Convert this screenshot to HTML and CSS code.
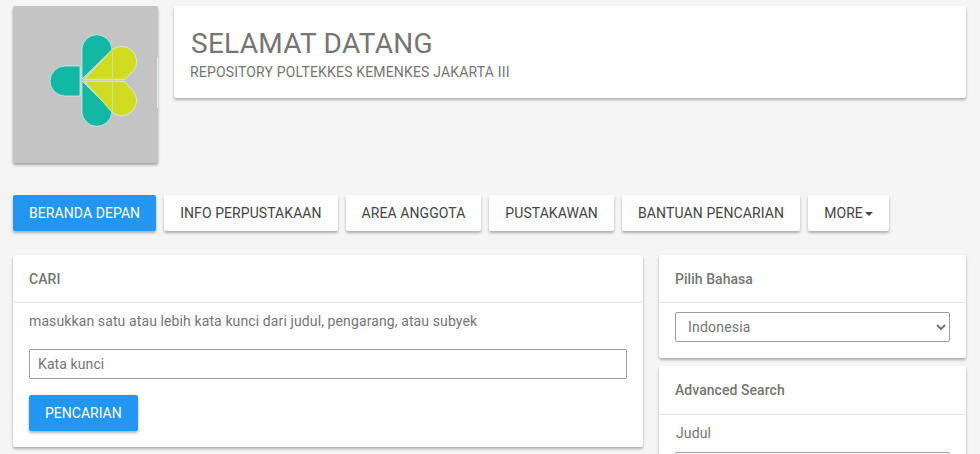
FILE: index.html
```html
<!DOCTYPE html>
<html lang="id">
<head>
<meta charset="utf-8">
<title>Repository Poltekkes Kemenkes Jakarta III</title>
<link rel="stylesheet" href="styles.css">
</head>
<body>
<div class="page">
  <header class="top">
    <div class="logo-card">
      <svg class="logo" viewBox="0 0 145 157" width="145" height="157" aria-hidden="true">
        <g transform="translate(-13 -6)" stroke="#dff5ee" stroke-width="0.7">
          <path class="teal" d="M80 66H65a15 15 0 0 0 0 30H80Z"/>
          <path class="teal" d="M82 79V48a15 15 0 0 1 29.8 0V50Z"/>
          <path class="teal" d="M82 81V113a15 15 0 0 0 29.8 0V110Z"/>
          <path class="lime" d="M84.5 79.3L111.4 50.4A15 15 0 0 1 132.6 71.6L124.5 79.3Z"/>
          <path class="lime" d="M84.5 81.3L124.5 81.3L132.6 90.4A15 15 0 0 1 111.4 111.6Z"/>
          <path class="divide" d="M112.5 52V111"/>
          <path class="edge" d="M157.5 57V108"/>
        </g>
      </svg>
    </div>
    <div class="welcome">
      <h1 class="welcome-title">SELAMAT DATANG</h1>
      <p class="welcome-sub">REPOSITORY POLTEKKES KEMENKES JAKARTA III</p>
    </div>
  </header>

  <nav class="nav">
    <a class="btn btn-primary">BERANDA DEPAN</a>
    <a class="btn">INFO PERPUSTAKAAN</a>
    <a class="btn">AREA ANGGOTA</a>
    <a class="btn">PUSTAKAWAN</a>
    <a class="btn btn-wide">BANTUAN PENCARIAN</a>
    <a class="btn">MORE<span class="caret"></span></a>
  </nav>

  <div class="columns">
    <main class="main">
      <section class="card">
        <div class="card-head">CARI</div>
        <div class="card-body search-body">
          <p class="hint">masukkan satu atau lebih kata kunci dari judul, pengarang, atau subyek</p>
          <input class="field" type="text" placeholder="Kata kunci">
          <div><button class="btn btn-primary btn-plain" type="button">PENCARIAN</button></div>
        </div>
      </section>
    </main>
    <aside class="side">
      <section class="card">
        <div class="card-head">Pilih Bahasa</div>
        <div class="card-body lang-body">
          <select class="field select"><option>Indonesia</option></select>
        </div>
      </section>
      <section class="card">
        <div class="card-head card-head-tall">Advanced Search</div>
        <div class="card-body adv-body">
          <label class="label">Judul</label>
          <input class="field" type="text">
        </div>
      </section>
    </aside>
  </div>
</div>
</body>
</html>
```
FILE: styles.css
```css
* { box-sizing: border-box; }
html, body { height: 454px; overflow: hidden; }
body {
  margin: 0;
  background: #f5f5f5;
  color: #757575;
  font-family: Roboto, "Liberation Sans", sans-serif;
  font-size: 14px;
}
.page { padding: 6px 14px 0 13px; }
.top { display: flex; gap: 16px; align-items: flex-start; }
.logo-card {
  width: 145px;
  height: 157px;
  flex: none;
  background: #c4c4c4;
  border-radius: 2px;
  box-shadow: 0 2px 3px rgba(0,0,0,.35);
}
.logo { display: block; }
.teal { fill: #12b8a4; }
.lime { fill: #cfdc20; }
.divide { stroke: #d8dc9c; stroke-width: 1; fill: none; }
.edge { stroke: #dbeeea; stroke-width: 1; fill: none; }
.welcome {
  flex: 1;
  height: 92px;
  background: #fff;
  border-radius: 2px;
  padding: 21px 16px 0;
  box-shadow: 0 2px 3px rgba(0,0,0,.3);
}
.welcome-title { margin: 0 0 0 1px; font-size: 28px; line-height: 34px; font-weight: 400; letter-spacing: .27px; color: #757575; }
.welcome-sub { margin: 3px 0 0; font-size: 14px; line-height: 16px; letter-spacing: .17px; color: #757575; }
.nav { display: flex; gap: 8px; margin-top: 32px; }
.btn {
  display: inline-block;
  height: 36px;
  padding: 0 16px;
  border: 0;
  border-radius: 2px;
  background: #fff;
  color: #444;
  font: 400 14px/36px Roboto, "Liberation Sans", sans-serif;
  letter-spacing: .07px;
  box-shadow: 0 2px 3px rgba(0,0,0,.3);
}
.btn-primary { background: #2196f3; color: #fff; }
.btn-plain { letter-spacing: 0; }
.btn-wide { letter-spacing: .12px; }
.caret {
  display: inline-block;
  margin-left: 2px;
  vertical-align: middle;
  border-top: 4px solid #444;
  border-left: 4px solid transparent;
  border-right: 4px solid transparent;
}
.columns { display: flex; gap: 16px; margin-top: 24px; align-items: flex-start; }
.main { width: 630px; flex: none; }
.side { flex: 1; display: flex; flex-direction: column; gap: 8px; }
.card {
  background: #fff;
  border-radius: 2px;
  box-shadow: 0 2px 3px rgba(0,0,0,.3);
}
.card-head {
  height: 48px;
  padding: 0 16px;
  border-bottom: 1px solid #e4e4e4;
  font-size: 14px;
  font-weight: 500;
  line-height: 48px;
  letter-spacing: .05px;
  color: #757575;
}
.card-head-tall { height: 49px; }
.card-body { padding: 0 16px; }
.search-body { height: 144px; padding-top: 9px; }
.hint { margin: 0; font-size: 14px; line-height: 18px; color: #757575; letter-spacing: .11px; }
.field {
  display: block;
  width: 100%;
  height: 30px;
  padding: 0 8px;
  border: 1px solid #9e9e9e;
  border-radius: 2px;
  background: #fff;
  color: #757575;
  font: 400 14px Roboto, "Liberation Sans", sans-serif;
  letter-spacing: .1px;
}
.field::placeholder { color: #757575; opacity: 1; }
.search-body .field { margin: 19px 0 16px; }
.lang-body { height: 55px; padding-top: 9px; }
.select { padding-left: 8px; letter-spacing: .2px; }
.adv-body { height: 40px; padding-top: 9px; overflow: visible; }
.label { display: block; margin: 0 0 10px 1px; font-size: 14px; line-height: 18px; letter-spacing: .1px; }
```
